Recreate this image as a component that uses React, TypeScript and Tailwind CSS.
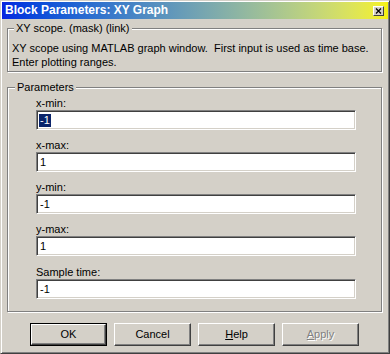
import React from 'react';

const font = "font-['Liberation_Sans',Arial,sans-serif]";

const Field: React.FC<{ label: string; value: string; selected?: boolean; top: string }> = ({ label, value, selected, top }) => (
  <div className={`flex flex-col ${top}`}>
    <div className="h-[13px] leading-[13px] text-[11px] text-black">{label}</div>
    <div className="w-[320px] h-[20px] bg-white border border-t-[#808080] border-l-[#808080] border-r-white border-b-white shadow-[inset_1px_1px_0_#404040,inset_-1px_-1px_0_#d4d0c8] flex items-center pl-[2px]">
      {selected ? (
        <span className="bg-[#0a246a] text-white text-[11px] leading-[13px] px-[1px]">{value}</span>
      ) : (
        <span className="text-black text-[11px] leading-[13px] px-[1px]">{value}</span>
      )}
    </div>
  </div>
);

const Btn: React.FC<{ children: React.ReactNode; isDefault?: boolean; disabled?: boolean }> = ({ children, isDefault, disabled }) => (
  <div className={`w-[77px] h-[23px] ${isDefault ? 'border border-black' : ''}`}>
    <div className="w-full h-full bg-[#d4d0c8] border border-t-white border-l-white border-r-[#404040] border-b-[#404040] shadow-[inset_-1px_-1px_0_#808080] flex items-center justify-center">
      <span className={`text-[11px] leading-[13px] ${disabled ? 'text-[#808080] [text-shadow:1px_1px_0_#fff]' : 'text-black'}`}>{children}</span>
    </div>
  </div>
);

export default function App() {
  return (
    <div className={`w-[390px] h-[354px] bg-[#d4d0c8] border border-t-[#d4d0c8] border-l-[#d4d0c8] border-r-[#404040] border-b-[#404040] shadow-[inset_1px_1px_0_#fff,inset_-1px_-1px_0_#808080] p-[1px] flex flex-col ${font}`}>
      {/* Title bar */}
      <div className="h-[17px] bg-gradient-to-r from-[#0a24e0] to-[#f6f208] flex items-center justify-between pl-[3px] pr-[4px]">
        <span className="text-white font-bold text-[12px] leading-[13px]">Block Parameters: XY Graph</span>
        <div className="w-[11px] h-[10px] bg-[#d4d0c8] border border-t-white border-l-white border-r-[#404040] border-b-[#404040] flex items-center justify-center">
          <svg width="7" height="6" viewBox="0 0 7 6">
            <path d="M1 0.5 L6 5.5 M6 0.5 L1 5.5" stroke="#000" strokeWidth="1.2" />
          </svg>
        </div>
      </div>

      {/* Mask description group */}
      <div className="relative mt-[9px] ml-[5px] w-[375px] h-[44px] border border-[#808080] shadow-[inset_1px_1px_0_#fff,1px_1px_0_#fff] pl-[4px] pt-[12px]">
        <span className="absolute -top-[7px] left-[6px] px-[2px] bg-[#d4d0c8] text-[11px] leading-[13px] text-black">XY scope. (mask) (link)</span>
        <p className="text-[11px] leading-[14px] text-black whitespace-pre">XY scope using MATLAB graph window.  First input is used as time base.</p>
        <p className="text-[11px] leading-[14px] text-black">Enter plotting ranges.</p>
      </div>

      {/* Parameters group */}
      <div className="relative mt-[15px] ml-[5px] w-[375px] h-[225px] border border-[#808080] shadow-[inset_1px_1px_0_#fff,1px_1px_0_#fff] pl-[28px] pt-[9px] flex flex-col">
        <span className="absolute -top-[7px] left-[7px] px-[2px] bg-[#d4d0c8] text-[11px] leading-[13px] text-black">Parameters</span>
        <Field label="x-min:" value="-1" selected top="" />
        <Field label="x-max:" value="1" top="mt-[9px]" />
        <Field label="y-min:" value="-1" top="mt-[9px]" />
        <Field label="y-max:" value="1" top="mt-[9px]" />
        <Field label="Sample time:" value="-1" top="mt-[10px]" />
      </div>

      {/* Buttons */}
      <div className="mt-[11px] ml-[28px] flex gap-[7px]">
        <Btn isDefault>OK</Btn>
        <Btn>Cancel</Btn>
        <Btn><span className="underline">H</span>elp</Btn>
        <Btn disabled><span className="underline">A</span>pply</Btn>
      </div>
    </div>
  );
}
